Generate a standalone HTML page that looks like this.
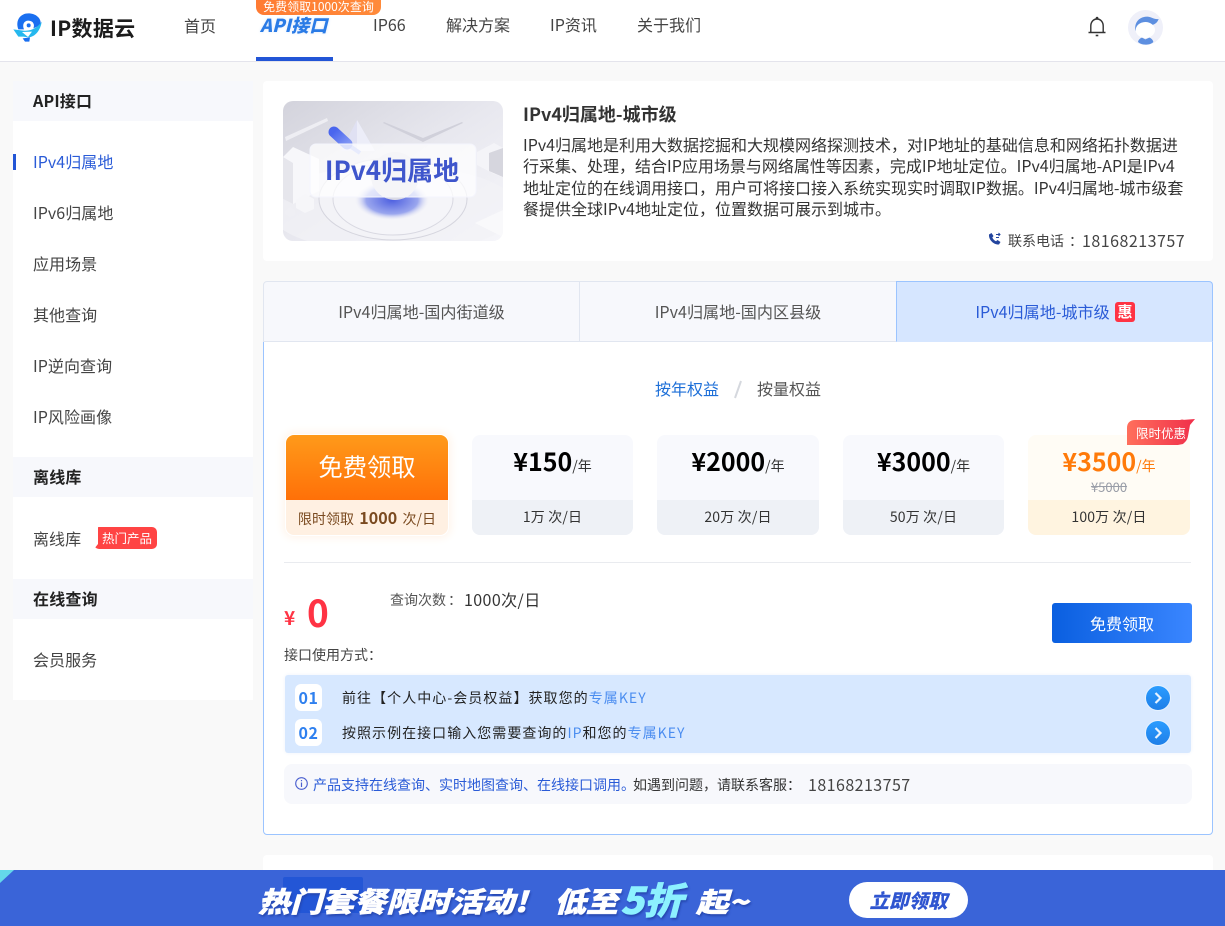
<!DOCTYPE html>
<html lang="zh-CN"><head><meta charset="utf-8"><title>IP数据云</title>
<style>
*{box-sizing:border-box;margin:0;padding:0}
html,body{width:1225px;height:926px;overflow:hidden;background:#f9f9f9}
body{position:relative;font-family:"Noto Sans CJK SC","Liberation Sans",sans-serif;color:#333;font-size:16px}
.a{position:absolute;white-space:nowrap}
.t{position:absolute;white-space:nowrap;line-height:20px}
.card{position:absolute;top:435px;height:100px;border-radius:8px;overflow:hidden;background:#f8f9fd;text-align:center}
.card .top{height:65px;position:relative}
.card .bot{height:35px;line-height:35px;background:#eef1f6;font-size:14px;color:#333;letter-spacing:.15px}
.price{position:absolute;left:0;right:0;top:8px;line-height:36px;font-size:25px;font-weight:700;color:#000}
.price small{font-size:14px;font-weight:400;color:#333}
.side{position:absolute;left:33px;line-height:20px;font-size:16px;color:#444;white-space:nowrap;letter-spacing:.05px}
.head{position:absolute;left:13px;width:240px;height:40px;background:#f7f8fc;padding-left:20px;line-height:38px;font-size:16px;font-weight:700;color:#222;letter-spacing:.2px}
.white{position:absolute;left:13px;width:240px;background:#fff}
.num{position:absolute;left:295px;width:27px;height:27px;border-radius:6px;background:#fff;color:#2f80ef;font-weight:700;font-size:16px;line-height:26px;text-align:center;letter-spacing:.5px}
.arrow{position:absolute;left:1144.500px;width:26px;height:26px;border-radius:50%;background:linear-gradient(#2a9cff,#1f7fe8);border:1px solid #e6f2ff}
.tab{position:absolute;top:281px;height:61px;background:#f7f8fc;border:1px solid #e1e6f0;line-height:59px;text-align:center;font-size:16.100px;color:#555}
b.hl{font-weight:400;color:#4b8df0}
.bn{position:absolute;white-space:nowrap;font-weight:900;font-style:italic;color:#fff;text-shadow:1px 2px 2px #2445ad;-webkit-text-stroke:.5px currentColor;transform-origin:left center}
</style></head><body>

<!-- header -->
<div class="a" style="left:0;top:0;width:1225px;height:62px;background:#fff;border-bottom:1px solid #e4e4ec"></div>
<svg class="a" style="left:10px;top:10px" width="35" height="35" viewBox="30 30 105 105">
<path d="M55 88C45 60 62 40 85 40c23 0 40 15 37 35l-22 10c5-10 0-23-15-23-13 0-19 12-13 26z" fill="#1a6ff0"/>
<circle cx="86" cy="76" r="6" fill="#1a6ff0"/>
<path d="M40 88l30 4c25 3 45-12 55-27-3 25-20 47-40 47l-15-2-15 0z" fill="#25b8ee"/>
<path d="M66 96l30-1-12 16z" fill="#fff"/>
<path d="M68 115l22-3-2 13H75z" fill="#1a6ff0"/>
</svg>
<div class="a" style="left:50px;top:13px;font-size:21px;line-height:30px;font-weight:700;color:#1c1c1c;letter-spacing:.3px">IP数据云</div>
<div class="t" style="left:184px;top:15px;color:#444">首页</div>
<div class="a" style="left:256px;top:0;width:125px;height:15px;background:linear-gradient(90deg,#ff7b33,#ff8a3a);border-radius:0 0 8px 8px;color:#fff;font-size:12px;line-height:14px;text-align:center;white-space:nowrap">免费领取1000次查询</div>
<div class="a" style="left:260px;top:14px;font-size:18px;line-height:22px;font-weight:900;font-style:italic;color:#2a7be6;letter-spacing:.2px;text-shadow:0 0 3px #dbe8fb">API接口</div>
<div class="a" style="left:256px;top:57px;width:77px;height:4px;background:#2255d6"></div>
<div class="t" style="left:373px;top:14px;color:#444">IP66</div>
<div class="t" style="left:446px;top:14px;color:#444">解决方案</div>
<div class="t" style="left:550px;top:14px;color:#444">IP资讯</div>
<div class="t" style="left:637px;top:14px;color:#444">关于我们</div>
<svg class="a" style="left:1087px;top:16px" width="20" height="21" viewBox="0 0 20 21" fill="none" stroke="#333" stroke-width="1.400">
<path d="M1.500 16.500h17M3.800 16.500V10c0-4 2.600-7 6.200-7s6.200 3 6.200 7v6.500"/><circle cx="10" cy="2.200" r=".7" fill="#333"/><path d="M8.700 19.500h2.600" stroke-width="1.600"/></svg>
<svg class="a" style="left:1128px;top:10px" width="35" height="35" viewBox="204 30 105 105">
<circle cx="256.500" cy="82.500" r="52.500" fill="#eff0f9"/>
<path d="M226 92c-4-27 14-42 36-42 10 0 23 10 34 7-4 11-11 15-16 17z" fill="#5d8fe0"/>
<ellipse cx="256" cy="90" rx="29" ry="24" fill="#fff"/>
<path d="M234 126c1-6 6-11 12-13l10 5 12-5c6 2 11 7 12 13-6 6-15 8-23 8s-17-2-23-8z" fill="#5d8fe0"/>
</svg>

<!-- sidebar -->
<div class="head" style="top:81px">API接口</div>
<div class="white" style="top:121px;height:336px"></div>
<div class="a" style="left:13px;top:154px;width:3px;height:16px;background:#2255d6"></div>
<div class="side" style="top:151px;color:#2a5bd7">IPv4归属地</div>
<div class="side" style="top:202px">IPv6归属地</div>
<div class="side" style="top:253px">应用场景</div>
<div class="side" style="top:304px">其他查询</div>
<div class="side" style="top:355px">IP逆向查询</div>
<div class="side" style="top:406px">IP风险画像</div>
<div class="head" style="top:457px">离线库</div>
<div class="white" style="top:497px;height:82px"></div>
<div class="side" style="top:528px">离线库</div>
<div class="a" style="left:94px;top:527px;width:63px;height:22px;background:#ff4444;border-radius:5px;color:#fff;font-size:12.500px;line-height:22px;text-align:center;padding-left:3px;clip-path:polygon(4px 0,100% 0,100% 100%,0 100%,4px 17px)">热门产品</div>
<div class="head" style="top:579px">在线查询</div>
<div class="white" style="top:619px;height:81px"></div>
<div class="side" style="top:649px">会员服务</div>

<!-- top card -->
<div class="a" style="left:263px;top:81px;width:950px;height:180px;background:#fff;border-radius:4px"></div>
<svg class="a" style="left:283px;top:101px;border-radius:10px" width="220" height="140" viewBox="0 0 220 140">
<defs>
<linearGradient id="g" x1="0" y1="0" x2="1" y2="1"><stop offset="0" stop-color="#d3d3dc"/><stop offset=".5" stop-color="#e8e8ef"/><stop offset="1" stop-color="#f6f6fa"/></linearGradient>
<radialGradient id="r"><stop offset="0" stop-color="#4e60e0"/><stop offset=".7" stop-color="#9aa6ee"/><stop offset="1" stop-color="#e4e5f3" stop-opacity="0"/></radialGradient>
<linearGradient id="p" x1="0" y1="0" x2="1" y2="1"><stop offset="0" stop-color="#4a66ee"/><stop offset="1" stop-color="#7f95f4"/></linearGradient>
</defs>
<rect width="220" height="140" fill="url(#g)"/>
<ellipse cx="110" cy="108" rx="125" ry="44" fill="#f2f2f7" opacity=".7"/>
<ellipse cx="110" cy="98" rx="74" ry="41" fill="#f3f3f7" stroke="#d5d5de"/>
<ellipse cx="110" cy="98" rx="60" ry="36" fill="#f5f5f9" stroke="#d9d9e2"/>
<ellipse cx="109" cy="99" rx="37" ry="20" fill="url(#r)"/>
<path d="M58 50l16-31 18 31z" fill="#e0e1f3"/>
<path d="M74 19l18 31H74z" fill="#ecedf8"/>
<circle cx="112" cy="75" r="24" fill="#d9d9e4"/>
<path d="M2 36l42-19 1 3L3 40z" fill="#eeeef3"/>
<path d="M100 22l40 19 40-19-1-1-39 16-39-16z" fill="#d0d0da"/>
<path d="M0 56l10-10 26 12v32L10 103 0 98z" fill="#f7f7fa"/><path d="M0 56l10 6v41L0 98z" fill="#e6e6ec"/>
<path d="M13 99l9-6 9 5v10l-9 4-9-5z" fill="#f6f6f9"/><path d="M2 110l5-4 5 3v5l-5 2-5-3z" fill="#efeff4"/>
<path d="M194 51l17-9 9 5v29l-9-3-17-9z" fill="#f4f4f8"/><path d="M206 52l14-5v29l-14-6z" fill="#d6d6de"/>
<path d="M192 122l28-13v27z" fill="#f9f9fb"/>
<path d="M64 43l13 9" stroke="#a9b6f4" stroke-width="4"/>
<path d="M51 31l13 12" stroke="url(#p)" stroke-width="11" stroke-linecap="round"/>
<rect x="27" y="43" width="166" height="53" rx="6" fill="#fff" fill-opacity=".72" stroke="#f4f5fd"/>
<text x="109" y="79" text-anchor="middle" font-family="'Noto Sans CJK SC',sans-serif" font-size="26" font-weight="700" fill="#3f56cc">IPv4归属地</text>
</svg>
<div class="a" style="left:523px;top:102px;font-size:18px;line-height:24px;font-weight:700;color:#333">IPv4归属地-城市级</div>
<div class="a" style="left:523px;top:134px;font-size:16px;line-height:21.300px;color:#333">IPv4归属地是利用大数据挖掘和大规模网络探测技术，对IP地址的基础信息和网络拓扑数据进<br>行采集、处理，结合IP应用场景与网络属性等因素，完成IP地址定位。IPv4归属地-API是IPv4<br>地址定位的在线调用接口，用户可将接口接入系统实现实时调取IP数据。IPv4归属地-城市级套<br>餐提供全球IPv4地址定位，位置数据可展示到城市。</div>
<svg class="a" style="left:988px;top:232px" width="14" height="14" viewBox="0 0 14 14"><path d="M1 2.500L3.500 1 5.500 4 4.300 5.500c.8 1.700 2 3 3.700 3.800L9.500 8l3 2-1.500 2.500C5.500 13 .5 7.500 1 2.500z" fill="#23459e"/><path d="M8 2.500h4M10.500 1l1.500 1.500L10.500 4M8 5.500h3" fill="none" stroke="#23459e"/></svg>
<div class="a" style="left:1008px;top:231px;font-size:14px;line-height:20px;color:#444">联系电话<span style="margin-left:5px">：</span></div>
<div class="a" style="left:1082px;top:230px;font-size:16px;line-height:20px;color:#444;letter-spacing:.5px">18168213757</div>

<!-- panel -->
<div class="a" style="left:263px;top:341px;width:950px;height:494px;background:#fff;border:1px solid #9bc4ff;border-radius:0 0 4px 4px"></div>
<div class="tab" style="left:263px;width:317px;border-radius:4px 0 0 0">IPv4归属地-国内街道级</div>
<div class="tab" style="left:579px;width:318px">IPv4归属地-国内区县级</div>
<div class="tab" style="left:896px;width:317px;background:#d6e6ff;border-color:#9bc4ff;border-bottom-color:#d6e6ff;border-radius:0 4px 0 0;color:#2a5bd7;padding-right:24px">IPv4归属地-城市级</div>
<div class="a" style="left:1115px;top:302px;width:20px;height:20px;background:#ff3344;border-radius:3px;color:#fff;font-size:15px;font-weight:700;line-height:20px;text-align:center">惠</div>

<div class="t" style="left:655px;top:378px;color:#1d6fd8">按年权益</div>
<svg class="a" style="left:733px;top:380px" width="10" height="20"><path d="M8 1L2 18" stroke="#d5d8de" stroke-width="2"/></svg>
<div class="t" style="left:757px;top:378px;color:#555">按量权益</div>

<!-- price cards -->
<div class="card" style="left:286px;width:162px;overflow:visible;background:none;box-shadow:0 0 0 1px #fff,0 0 9px 3px #fff4ea">
 <div class="top" style="background:linear-gradient(#ff9a1a,#ff7008);border-radius:8px 8px 0 0;color:#fff;font-size:24.300px;line-height:62px">免费领取</div>
 <div class="bot" style="background:#fff0e2;color:#7a4a20;border-radius:0 0 8px 8px;font-size:14px;letter-spacing:.05px">限时领取 <b style="font-size:16px;margin:0 2px">1000</b> 次/日</div>
</div>
<div class="card" style="left:472px;width:161px"><div class="top"><div class="price">¥150<small>/年</small></div></div><div class="bot">1万 次/日</div></div>
<div class="card" style="left:657px;width:162px"><div class="top"><div class="price">¥2000<small>/年</small></div></div><div class="bot">20万 次/日</div></div>
<div class="card" style="left:843px;width:161px"><div class="top"><div class="price">¥3000<small>/年</small></div></div><div class="bot">50万 次/日</div></div>
<div class="card" style="left:1028px;width:162px;background:#fffcf5"><div class="top"><div class="price" style="color:#ff7a0a">¥3500<small style="color:#ff7a0a">/年</small></div><div class="a" style="left:0;right:0;top:43px;font-size:13px;line-height:18px;color:#9a9ea8;text-decoration:line-through">¥5000</div></div><div class="bot" style="background:#fff4e0">100万 次/日</div></div>
<svg class="a" style="left:1127px;top:418px" width="69" height="27" viewBox="0 0 69 27"><defs><linearGradient id="rb" x1="0" x2="1"><stop offset="0" stop-color="#ff6f5c"/><stop offset="1" stop-color="#f02f4a"/></linearGradient></defs><path d="M0 27V10c0-5 3-8 8-8h45l4-1-2 1 13-1-5 6-2 11c-1 5-3 6-5 8-5 1-10 2-14 2z" fill="url(#rb)"/></svg>
<div class="a" style="left:1136px;top:423px;font-size:12.500px;line-height:20px;color:#fff">限时优惠</div>

<div class="a" style="left:284px;top:562px;width:907px;height:1px;background:#e9ebef"></div>

<!-- total -->
<div class="a" style="left:284px;top:606px;font-size:19px;line-height:24px;font-weight:700;color:#ff3344">¥</div>
<div class="a" style="left:307px;top:587px;font-size:37px;line-height:48px;font-weight:700;color:#ff3344">0</div>
<div class="t" style="left:390px;top:590px;font-size:14px;color:#555">查询次数<span style="margin-left:2px">：</span></div>
<div class="t" style="left:464px;top:589px;color:#333;letter-spacing:.4px">1000次/日</div>
<div class="t" style="left:284px;top:645px;font-size:14px;color:#444">接口使用方式：</div>
<div class="a" style="left:1052px;top:603px;width:140px;height:40px;border-radius:3px;background:linear-gradient(90deg,#0a5fe0,#3a86ff);color:#fff;font-size:16px;line-height:40px;text-align:center">免费领取</div>

<!-- steps -->
<div class="a" style="left:285px;top:675px;width:906px;height:78px;background:#d7e8ff;border-radius:3px;box-shadow:0 0 4px #eef3fb"></div>
<div class="num" style="top:684px">01</div>
<div class="num" style="top:719px">02</div>
<div class="t" style="left:342px;top:688px;font-size:14px;letter-spacing:1.050px;color:#222">前往【个人中心-会员权益】获取您的<b class="hl">专属KEY</b></div>
<div class="t" style="left:342px;top:723px;font-size:14px;letter-spacing:1.030px;color:#222">按照示例在接口输入您需要查询的<b class="hl">IP</b>和您的<b class="hl">专属KEY</b></div>
<div class="arrow" style="top:684.500px"><svg width="24" height="24" viewBox="0 0 24 24" style="display:block"><path d="M9.500 7l5 5-5 5" fill="none" stroke="#e8f3ff" stroke-width="2.200"/></svg></div>
<div class="arrow" style="top:719.500px"><svg width="24" height="24" viewBox="0 0 24 24" style="display:block"><path d="M9.500 7l5 5-5 5" fill="none" stroke="#e8f3ff" stroke-width="2.200"/></svg></div>

<!-- note -->
<div class="a" style="left:284px;top:764px;width:908px;height:40px;background:#f7f8fc;border-radius:8px"></div>
<svg class="a" style="left:295px;top:777px" width="13" height="13" viewBox="0 0 13 13"><circle cx="6.500" cy="6.500" r="5.800" fill="none" stroke="#4a5fcf" stroke-width="1.100"/><path d="M6.500 5.500v4.500M6.500 3v1.300" stroke="#4a5fcf" stroke-width="1.200"/></svg>
<div class="t" style="left:313px;top:775px;font-size:14px;color:#2a5bd7">产品支持在线查询、实时地图查询、在线接口调用。<span style="color:#333;margin-left:-2px">如遇到问题，请联系客服：</span></div>
<div class="t" style="left:808px;top:774px;font-size:16px;color:#444;letter-spacing:.45px">18168213757</div>

<!-- lower card + banner -->
<div class="a" style="left:263px;top:855px;width:950px;height:71px;background:#fff;border-radius:4px"></div>
<div class="a" style="left:0;top:870px;width:1225px;height:56px;background:#3a64d8"></div>
<div class="a" style="left:0;top:870px;width:0;height:0;border-top:13px solid #64d8ea;border-right:14px solid transparent"></div>
<div class="a" style="left:283px;top:877px;width:80px;height:36px;background:#2356d6;border-radius:2px"></div>
<div class="bn" style="left:258px;top:882px;font-size:28px;line-height:38px;transform:scaleX(1.145)">热门套餐限时活动!</div>
<div class="bn" style="left:554px;top:882px;font-size:28px;line-height:38px;transform:scaleX(1.140)">低至</div>
<div class="bn" style="left:620px;top:875px;font-size:37px;line-height:46px;color:#8df1ff;transform:scaleX(1.060)">5折</div>
<div class="bn" style="left:696px;top:883px;font-size:27px;line-height:36px;transform:scaleX(1.200)">起~</div>
<div class="a" style="left:849px;top:882px;width:119px;height:36px;border-radius:18px;background:#fff;color:#2f55d0;font-size:19.500px;line-height:35px;font-weight:900;font-style:italic;text-align:center">立即领取</div>
</body></html>
